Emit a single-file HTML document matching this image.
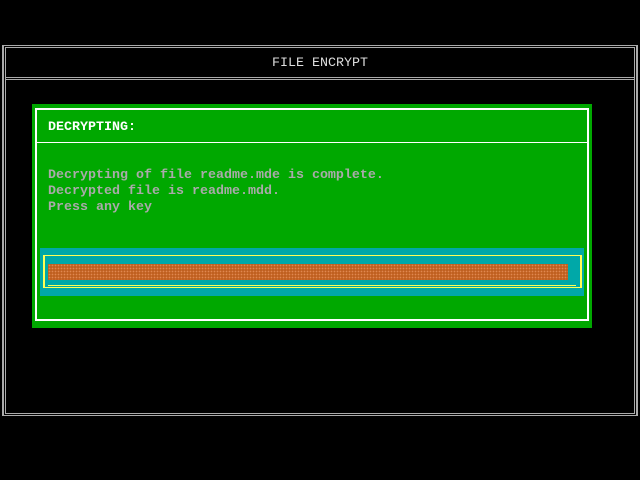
<html><head><style>
body{margin:0;width:640px;height:480px;background:#000;position:relative;overflow:hidden;font-family:"Liberation Mono",monospace;font-size:13.33px}
div{position:absolute;box-sizing:border-box}
.t{white-space:pre;line-height:16px}
</style></head><body>
<div style="left:2px;top:45px;width:636px;height:371px;border:1px solid #aaa;border-left-width:2px;border-right-width:2px"></div>
<div style="left:5px;top:47px;width:630px;height:367px;border:1px solid #aaa"></div>
<div style="left:5px;top:77px;width:630px;height:1px;background:#aaa"></div>
<div style="left:5px;top:79px;width:630px;height:1px;background:#aaa"></div>
<div class="t" style="left:0;width:640px;top:56px;text-align:center;color:#ddd">FILE ENCRYPT</div>
<div style="left:32px;top:104px;width:560px;height:224px;background:#00a800"></div>
<div style="left:35px;top:108px;width:554px;height:213px;border:2px solid #fff"></div>
<div style="left:36px;top:142px;width:552px;height:1px;background:#fff"></div>
<div class="t" style="left:48px;top:120px;color:#fff;font-weight:bold">DECRYPTING:</div>
<div class="t" style="left:48px;top:168px;color:#aaa;font-weight:bold">Decrypting of file readme.mde is complete.
Decrypted file is readme.mdd.
Press any key</div>
<div style="left:40px;top:248px;width:544px;height:48px;background:#00a8a8"></div>
<div style="left:43px;top:255px;width:539px;height:33px;border:2px solid #ffff55;border-top-width:1px;border-bottom-width:1px"></div>
<div style="left:48px;top:285px;width:528px;height:1px;background:#ffff55"></div>
<div style="left:48px;top:264px;width:520px;height:16px;background:#c06020;background-image:radial-gradient(#e08850 35%,transparent 40%);background-size:3px 3px"></div>
</body></html>
